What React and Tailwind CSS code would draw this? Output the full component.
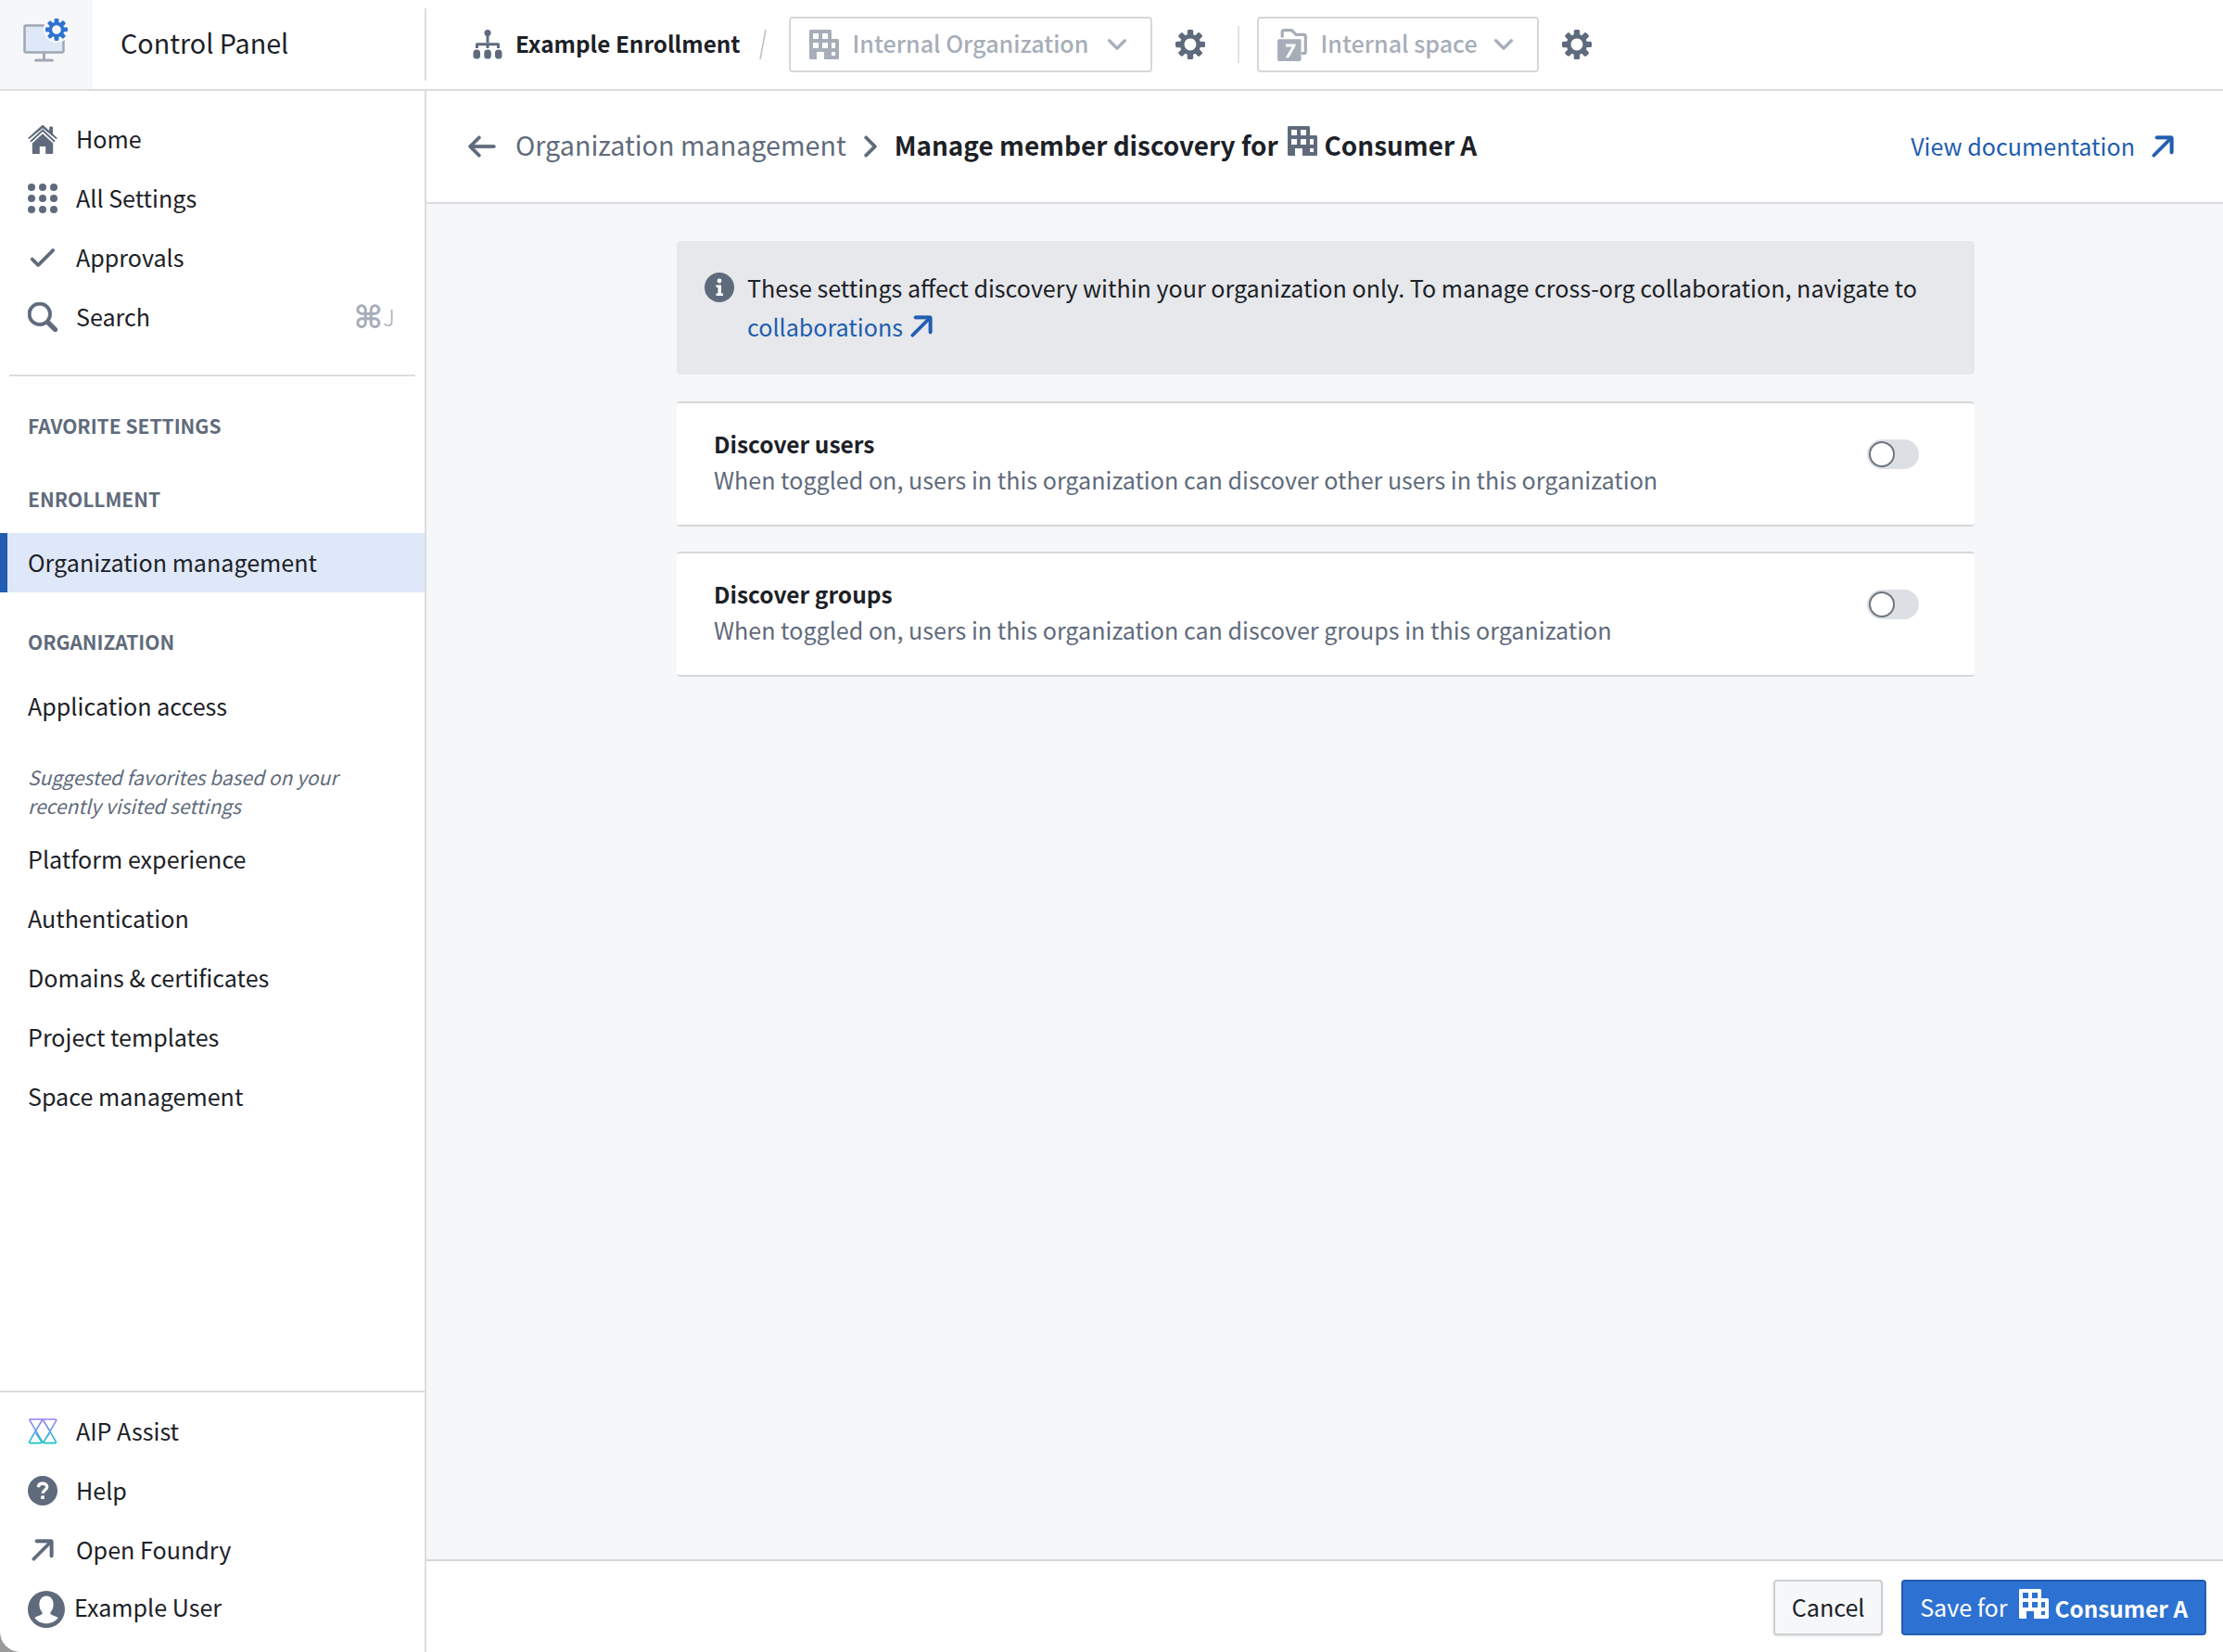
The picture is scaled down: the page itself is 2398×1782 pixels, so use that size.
// App.jsx
const Bp = ({ d, className = "w-8 h-8", thick }) => (
  <svg viewBox="0 0 20 20" fill="currentColor" fillRule="evenodd" className={`shrink-0 ${className}`}>
    <path d={d} stroke={thick ? "currentColor" : "none"} strokeWidth={thick ? 0.5 : 0} />
  </svg>
);

const COG = "M19 8h-2.31c-.14-.46-.33-.89-.56-1.3l1.7-1.7a.996.996 0 000-1.41l-1.41-1.41a.996.996 0 00-1.41 0l-1.7 1.7c-.41-.22-.84-.41-1.3-.55V1c0-.55-.45-1-1-1H9c-.55 0-1 .45-1 1v2.33c-.48.14-.94.34-1.37.58L4.98 2.28a.972.972 0 00-1.36 0L2.28 3.62c-.37.38-.37.99 0 1.36L3.9 6.6c-.24.44-.44.9-.59 1.4H1c-.55 0-1 .45-1 1v2c0 .55.45 1 1 1h2.31c.14.48.34.94.58 1.38l-1.61 1.62a.972.972 0 000 1.36l1.34 1.34c.38.37.99.37 1.36 0l1.62-1.61c.43.24.89.44 1.37.58V19c0 .55.45 1 1 1h2c.55 0 1-.45 1-1v-2.33c.48-.14.94-.33 1.37-.57l1.65 1.65c.39.39 1.02.39 1.41 0l1.41-1.41a.996.996 0 000-1.41l-1.65-1.65c.24-.43.43-.89.57-1.37H19c.55 0 1-.45 1-1V9c0-.55-.45-1-1-1zm-9 6c-2.21 0-4-1.79-4-4s1.79-4 4-4 4 1.79 4 4-1.79 4-4 4z";
const ARROW_TR = "M16 3H6c-.55 0-1 .45-1 1s.45 1 1 1h7.59L3.3 15.29a1.003 1.003 0 001.42 1.42L15 6.41V14c0 .55.45 1 1 1s1-.45 1-1V4c0-.55-.45-1-1-1z";
const ARROW_L = "M18 9H4.41l4.29-4.29c.19-.18.3-.43.3-.71a1.003 1.003 0 00-1.71-.71l-6 6c-.18.18-.29.43-.29.71 0 .28.11.53.29.71l6 6a1.003 1.003 0 001.42-1.42L4.41 11H18c.55 0 1-.45 1-1s-.45-1-1-1z";
const CHEV_R = "M13.71 9.29l-6-6a1.003 1.003 0 00-1.42 1.42l5.3 5.29-5.29 5.29c-.19.18-.3.43-.3.71a1.003 1.003 0 001.71.71l6-6c.18-.18.29-.43.29-.71 0-.28-.11-.53-.29-.71z";
const CHEV_D = "M16 6c-.28 0-.53.11-.71.29L10 11.59l-5.29-5.3a1.003 1.003 0 00-1.42 1.42l6 6c.18.18.43.29.71.29s.53-.11.71-.29l6-6A1.003 1.003 0 0016 6z";
const TICK = "M17 4c-.28 0-.53.11-.71.29L7 13.59 3.71 10.3A.965.965 0 003 10a1.003 1.003 0 00-.71 1.71l4 4c.18.18.43.29.71.29s.53-.11.71-.29l10-10A1.003 1.003 0 0017 4z";
const SEARCH = "M19.56 17.44l-4.94-4.94A8.004 8.004 0 0016 8c0-4.42-3.58-8-8-8S0 3.58 0 8s3.58 8 8 8c1.67 0 3.21-.51 4.5-1.38l4.94 4.94a1.498 1.498 0 102.12-2.12zM8 14c-3.31 0-6-2.69-6-6s2.69-6 6-6 6 2.69 6 6-2.69 6-6 6z";
const HOME = "M10 3.3l8.2 7.7c.5.5-.2 1.3-.8.8L10 5 2.6 11.8c-.6.5-1.3-.3-.8-.8L10 3.3zM10 .6c.3 0 .5.1.7.3l3.8 3.5V2.2c0-.4.3-.7.7-.7h1c.4 0 .7.3.7.7v4.3l2.7 2.5c.5.5-.2 1.3-.7.8L10 2.6 1.1 9.8c-.5.5-1.2-.3-.7-.8L9.3.9c.2-.2.4-.3.7-.3zM10 6.4l7 6.4V19c0 .6-.4 1-1 1h-4v-5H8v5H4c-.6 0-1-.4-1-1v-6.2l7-6.4z";
const BUILDING = "M1 0h13c.6 0 1 .4 1 1v5.2h4c.6 0 1 .4 1 1V19c0 .6-.4 1-1 1H10v-5H5v5H1c-.6 0-1-.4-1-1V1c0-.6.4-1 1-1zM2.5 2.5v3.75h3.75V2.5H2.5zm6.25 0v3.75h3.75V2.5H8.75zM2.5 8.75v3.75h3.75V8.75H2.5zm6.25 0v3.75h3.75V8.75H8.75zm6.25 0v3.75h2.5V8.75H15zm0 6.25v2.5h2.5V15H15z";

const Folder = () => (
  <svg viewBox="0 0 20 22" className="w-8 h-[35px] shrink-0 -my-1" fill="none">
    <path d="M3.2 6V2.2c0-.7.5-1.2 1.2-1.2h5.2l3 3h5.2c.7 0 1.2.5 1.2 1.2v10.3c0 .7-.5 1.2-1.2 1.2H16.2" stroke="currentColor" strokeWidth="2" />
    <path fill="currentColor" fillRule="evenodd" d="M1.2 7H11l4.2 0c.5 0 .8.4.8.8v12.9c0 .7-.5 1.3-1.2 1.3H1.2C.5 22 0 21.4 0 20.7V8.2C0 7.5.5 7 1.2 7zM5.6 10.4v1.8h4.3L5.4 19.6h2.2l4.6-8v-1.2H5.6z" />
  </svg>
);

const Grid = () => (
  <svg viewBox="0 0 32 32" fill="currentColor" className="w-8 h-8 shrink-0">
    {[4, 16, 28].flatMap((y) => [4, 16, 28].map((x) => <circle key={`${x}-${y}`} cx={x} cy={y} r="4" />))}
  </svg>
);

const Aip = () => (
  <svg viewBox="0 0 32 28" fill="none" className="w-8 h-7 shrink-0" strokeWidth="1.6" strokeLinejoin="round" strokeLinecap="round">
    <defs>
      <linearGradient id="aip" gradientUnits="userSpaceOnUse" x1="0" y1="0" x2="0" y2="28">
        <stop offset="0" stopColor="#9b7cf6" />
        <stop offset="0.55" stopColor="#5aa4e8" />
        <stop offset="1" stopColor="#12c6c0" />
      </linearGradient>
    </defs>
    <path stroke="url(#aip)" d="M2.5 1h27c1 0 1.5.8 1 1.6L17.2 25.4c-.6 1-1 1-1.4 0L2.4 2.6C1.9 1.8 1.5 1 2.5 1zM9 12.5L1.8 24.8c-.5.9 0 1.8.9 1.8h11c.9 0 1.4-.9.9-1.8L9 16.5M23 12.5l7.2 12.3c.5.9 0 1.8-.9 1.8h-11c-.9 0-1.4-.9-.9-1.8L23 16.5M16 1l-7 11.5M16 1l7 11.5" />
  </svg>
);

const Help = () => (
  <svg viewBox="0 0 32 32" className="w-8 h-8 shrink-0">
    <circle cx="16" cy="16" r="16" fill="currentColor" />
    <path d="M11.3 12.2c.3-2.6 2-3.9 4.700-3.900 2.800 0 4.700 1.500 4.700 3.800 0 3.400-4.600 3.200-4.600 6.900" fill="none" stroke="#fff" strokeWidth="3.400" />
    <rect x="14.200" y="21.400" width="3.600" height="3.600" fill="#fff" />
  </svg>
);

const User = () => (
  <svg viewBox="0 0 40 40" className="w-10 h-10 shrink-0">
    <circle cx="20" cy="20" r="20" fill="currentColor" />
    <path fill="#fff" d="M20 5.500c4.700 0 7.600 4 7.600 9.200 0 3.200-1 6-2.800 8-.7.8-.6 2.200.4 2.800 2.400 1.300 5.300 2 7.500 3.700-3 3.700-7.500 6-12.700 6s-9.700-2.300-12.700-6c2.200-1.700 5.100-2.400 7.500-3.700 1-.6 1.100-2 .4-2.800-1.800-2-2.800-4.800-2.800-8 0-5.200 2.900-9.200 7.600-9.200z" />
  </svg>
);

const Info = () => (
  <svg viewBox="0 0 32 32" className="w-8 h-8 shrink-0">
    <circle cx="16" cy="16" r="16" fill="#5f6b7c" />
    <circle cx="16" cy="9" r="2.400" fill="#fff" />
    <path fill="#fff" d="M12.500 13.500h5.500v9h2v2.500h-7.500v-2.500h2v-6.500h-2z" />
  </svg>
);

const LogoIcon = () => (
  <svg viewBox="0 0 100 96" className="w-[100px] h-[96px]" fill="none">
    <rect x="26.500" y="27.500" width="42" height="29" rx="1.500" fill="#dfe8f8" stroke="#a0a8b4" strokeWidth="2.500" />
    <path d="M47.500 57v7M38.500 65h18" stroke="#a0a8b4" strokeWidth="3" strokeLinecap="round" />
    <circle cx="61" cy="32" r="14" fill="#f6f7f9" />
    <g transform="translate(49 20) scale(1.2)">
      <path fill="#2d72d2" fillRule="evenodd" d={COG} />
    </g>
  </svg>
);

const NavRow = ({ icon, children, right, labelClass = "ml-5" }) => (
  <div className="flex items-center h-16 pl-[30px] pr-8 text-[#5f6b7c]">
    {icon}
    <span className={`${labelClass} text-[25.100px] text-[#1c2127]`}>{children}</span>
    {right}
  </div>
);

const Heading = ({ children, className = "" }) => (
  <div className={`h-8 pl-[30px] flex items-center text-[21px] font-semibold text-[#5f6b7c] ${className}`}>{children}</div>
);

const Link = ({ children }) => <div className="flex items-center h-16 pl-[30px] text-[25.100px] text-[#1c2127]">{children}</div>;

const Toggle = () => (
  <div className="relative shrink-0 w-14 h-8 mt-3.5 rounded-full bg-[#dce0e5]">
    <div className="absolute left-0.5 top-0.5 w-7 h-7 rounded-full bg-white border-2 border-[#6f7580]" />
  </div>
);

const SettingCard = ({ title, children }) => (
  <div className="flex items-start justify-between h-[135px] pl-10 pr-[60px] pt-[25px] bg-white border-y-2 border-[#d5d7da] rounded-[4px]">
    <div>
      <div className="text-[24.500px] leading-[38px] font-semibold text-[#1c2127]">{title}</div>
      <div className="text-[25.100px] leading-[38px] text-[#5f6b7c]">{children}</div>
    </div>
    <Toggle />
  </div>
);

const Select = ({ icon, label, width }) => (
  <div className={`flex items-center h-[60px] pl-5 pr-[22px] border-2 border-[#d5d7da] rounded-[4px] text-[#a7aeb9] ${width}`}>
    {icon}
    <span className="ml-[15px] -mt-0.5 text-[25.100px] font-medium">{label}</span>
    <Bp d={CHEV_D} thick className="w-7 h-7 ml-auto" />
  </div>
);

export default function App() {
  return (
    <div className="h-screen bg-[#9a9a9a] font-['Noto_Sans_CJK_SC','Source_Sans_Pro',sans-serif] overflow-hidden">
      <div className="flex flex-col h-full bg-white rounded-bl-[22px] overflow-hidden">
        {/* Top bar */}
        <header className="flex items-center shrink-0 h-[98px] border-b-2 border-[#dcdddf]">
          <div className="flex items-center w-[460px] h-full shrink-0">
            <div className="w-[100px] h-full bg-[#f6f7f9] shrink-0">
              <LogoIcon />
            </div>
            <div className="flex-1 ml-[30px] -mt-1 text-[28.700px] text-[#1c2127]">Control Panel</div>
            <div className="w-0.5 h-[78px] bg-[#dcdddf]" />
          </div>
          <svg viewBox="0 0 32 32" fill="#5f6b7c" className="w-8 h-8 ml-[50px] shrink-0">
            <circle cx="16" cy="3.500" r="3.500" />
            <rect x="14.500" y="6" width="3" height="8" />
            <path d="M3 16c0-1 .8-1.800 1.800-1.800h22.400c1 0 1.800.8 1.800 1.800v4h-3v-2.800H17.500V20h-3v-2.800H6V20H3z" />
            <rect x="0.500" y="21.500" width="7.500" height="10" rx="3.500" />
            <rect x="12.300" y="21.500" width="7.500" height="10" rx="3.500" />
            <rect x="24" y="21.500" width="7.500" height="10" rx="3.500" />
          </svg>
          <div className="ml-3.5 -mt-0.5 text-[24.300px] font-semibold text-[#1c2127]">Example Enrollment</div>
          <svg viewBox="0 0 8 34" className="w-2 h-[34px] ml-[20px] mr-[24px] shrink-0" fill="none">
            <path d="M1 33L7 1" stroke="#bcc1c8" strokeWidth="1.600" />
          </svg>
          <Select icon={<Bp d={BUILDING} />} label="Internal Organization" width="w-[392px]" />
          <div className="ml-[25px] text-[#5f6b7c]">
            <Bp d={COG} />
          </div>
          <div className="w-0.5 h-10 ml-[35px] mr-[19px] bg-[#e1e3e6]" />
          <Select icon={<Folder />} label="Internal space" width="w-[304px]" />
          <div className="ml-[25px] text-[#5f6b7c]">
            <Bp d={COG} />
          </div>
        </header>

        <div className="flex flex-1 min-h-0">
          {/* Sidebar */}
          <aside className="flex flex-col justify-between w-[460px] shrink-0 border-r-2 border-[#dcdddf]">
            <div>
              <div className="pt-5">
                <NavRow icon={<Bp d={HOME} />}>Home</NavRow>
                <NavRow icon={<Grid />}>All Settings</NavRow>
                <NavRow icon={<Bp d={TICK} thick />}>Approvals</NavRow>
                <NavRow
                  icon={<Bp d={SEARCH} thick />}
                  right={
                    <span className="flex items-center ml-auto text-[#a7aeb9]">
                      <span className="text-[34px] leading-none font-bold font-['DejaVu_Sans',sans-serif]">⌘</span>
                      <span className="text-[25px] font-light">J</span>
                    </span>
                  }
                >
                  Search
                </NavRow>
              </div>
              <div className="h-0.5 mt-[30px] mx-2.5 bg-[#dcdddf]" />
              <Heading className="mt-[38px]">FAVORITE SETTINGS</Heading>
              <Heading className="mt-[47px]">ENROLLMENT</Heading>
              <div className="flex items-center h-16 mt-5 pl-[22px] border-l-8 border-[#215db0] bg-[#dfe8f8] text-[25.100px] text-[#1c2127]">
                Organization management
              </div>
              <Heading className="mt-[38px]">ORGANIZATION</Heading>
              <div className="mt-[21px]">
                <Link>Application access</Link>
              </div>
              <div className="mt-[29px] pl-[30px] pr-10 text-[21px] leading-[31px] italic text-[#5f6b7c]">
                Suggested favorites based on your
                <br />
                recently visited settings
              </div>
              <div className="mt-2.5">
                <Link>Platform experience</Link>
                <Link>Authentication</Link>
                <Link>Domains &amp; certificates</Link>
                <Link>Project templates</Link>
                <Link>Space management</Link>
              </div>
            </div>
            <div className="h-[282px] pt-2.5 border-t-2 border-[#dcdddf]">
              <NavRow icon={<Aip />}>AIP Assist</NavRow>
              <NavRow icon={<Help />}>Help</NavRow>
              <NavRow icon={<Bp d={ARROW_TR} thick />}>Open Foundry</NavRow>
              <NavRow icon={<User />} labelClass="ml-2.5 -mt-1">Example User</NavRow>
            </div>
          </aside>

          {/* Main */}
          <main className="flex flex-col flex-1 min-w-0">
            <div className="flex items-center shrink-0 h-[122px] pl-[44px] pr-[49px] bg-white border-b-2 border-[#dcdddf]">
              <div className="text-[#5f6b7c]">
                <Bp d={ARROW_L} thick />
              </div>
              <span className="ml-5 -mt-1 text-[28.700px] text-[#5f6b7c]">Organization management</span>
              <div className="mx-2.5 text-[#5f6b7c]">
                <Bp d={CHEV_R} thick />
              </div>
              <span className="-mt-0.5 text-[27.900px] font-semibold text-[#1c2127]">Manage member discovery for</span>
              <div className="ml-[10px] mr-2 -mt-3 text-[#5f6b7c]">
                <Bp d={BUILDING} />
              </div>
              <span className="-mt-0.5 text-[27.900px] font-semibold text-[#1c2127]">Consumer A</span>
              <span className="ml-auto text-[25.100px] text-[#215db0]">View documentation</span>
              <div className="ml-3.5 text-[#215db0]">
                <Bp d={ARROW_TR} thick />
              </div>
            </div>

            <div className="flex-1 min-h-0 pt-10 bg-[#f6f7f9]">
              <div className="flex flex-col w-[1400px] ml-[270px]">
                <div className="flex items-start h-[144px] pt-[34px] pl-[30px] bg-[#e6e8eb] rounded-[4px]">
                  <Info />
                  <div className="ml-3.5 -mt-[5px] text-[25.100px] leading-[42px] text-[#1c2127]">
                    These settings affect discovery within your organization only. To manage cross-org collaboration, navigate to
                    <div className="flex items-center text-[#215db0]">
                      collaborations
                      <Bp d={ARROW_TR} thick className="w-8 h-8 ml-1" />
                    </div>
                  </div>
                </div>
                <div className="mt-[29px]">
                  <SettingCard title="Discover users">
                    When toggled on, users in this organization can discover other users in this organization
                  </SettingCard>
                </div>
                <div className="mt-[27px]">
                  <SettingCard title="Discover groups">
                    When toggled on, users in this organization can discover groups in this organization
                  </SettingCard>
                </div>
              </div>
            </div>

            <footer className="flex items-start justify-end shrink-0 h-[100px] pt-5 pr-[18px] gap-5 bg-white border-t-2 border-[#d5d7da]">
              <div className="flex items-center justify-center w-[118px] h-[60px] bg-[#f6f7f9] border-2 border-[#cdd0d3] rounded-[4px] text-[25.100px] text-[#1c2127] shadow-sm">
                Cancel
              </div>
              <div className="flex items-center h-[60px] px-[18px] bg-[#2d72d2] border-2 border-[#215db0] rounded-[4px] text-white">
                <span className="text-[25.100px]">Save for</span>
                <Bp d={BUILDING} className="w-8 h-8 ml-3 mr-[7px] -mt-2" />
                <span className="mt-0.5 text-[24.300px] font-semibold">Consumer A</span>
              </div>
            </footer>
          </main>
        </div>
      </div>
    </div>
  );
}
